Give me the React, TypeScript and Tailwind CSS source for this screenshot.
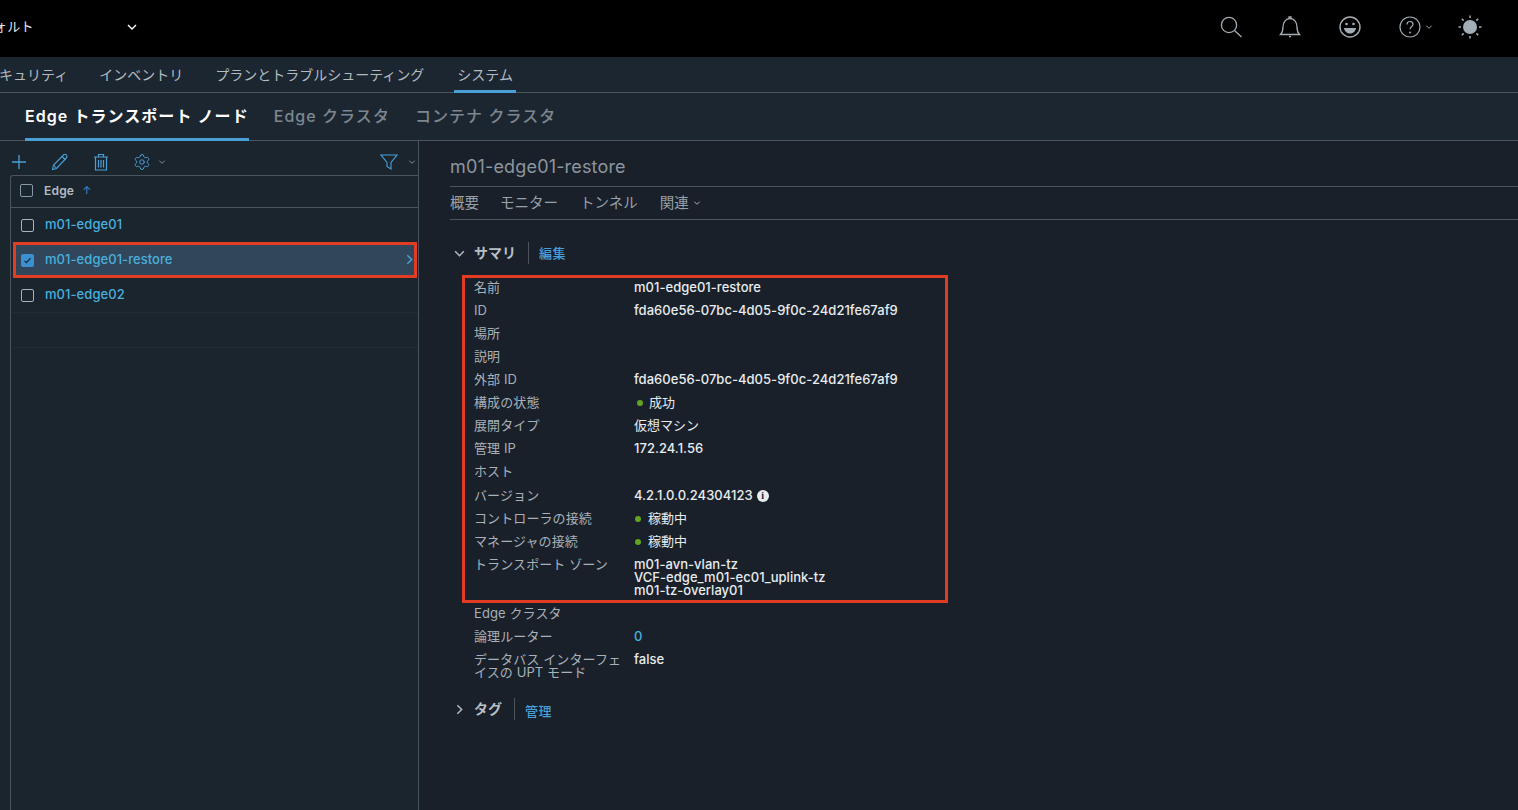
import React from "react";
import { Settings } from "lucide-react";

const FONT = "font-['Inter','Noto_Sans_CJK_JP',sans-serif]";

function Chevron({ className, dir = "down" }: { className?: string; dir?: "down" | "right" }) {
  return (
    <svg viewBox="0 0 12 12" className={className} fill="none" stroke="currentColor" strokeWidth="1.4">
      {dir === "down" ? <path d="M2 4l4 4 4-4" /> : <path d="M4 2l4 4-4 4" />}
    </svg>
  );
}

function TopIcons() {
  return (
    <div className="flex items-center text-[#a3adb5]">
      <svg viewBox="0 0 24 24" className="w-[24px] h-[24px] mr-[35px]" fill="none" stroke="currentColor" strokeWidth="1.3">
        <circle cx="10" cy="10" r="7.6" />
        <path d="M15.5 15.5L22.5 22" />
      </svg>
      <svg viewBox="0 0 24 24" className="w-[24px] h-[24px] mr-[36px]" fill="none" stroke="currentColor" strokeWidth="1.3">
        <path d="M2.5 19.5c2-2 2.5-3.5 2.5-7.5 0-5 3-8.500 7-8.500s7 3.500 7 8.500c0 4 .5 5.500 2.500 7.500z" />
        <path d="M11 3.500V2h2v1.500M11 21.500h2" />
      </svg>
      <svg viewBox="0 0 24 24" className="w-[24px] h-[24px] mr-[36px]" fill="none" stroke="currentColor" strokeWidth="1.4">
        <circle cx="12" cy="12" r="10" />
        <circle cx="8.500" cy="9" r="1.300" fill="currentColor" stroke="none" />
        <circle cx="15.500" cy="9" r="1.300" fill="currentColor" stroke="none" />
        <path d="M6 13h12c-.5 3.500-3 5.500-6 5.500s-5.500-2-6-5.500z" fill="currentColor" stroke="none" />
      </svg>
      <svg viewBox="0 0 24 24" className="w-[24px] h-[24px] mr-[3px]" fill="none" stroke="currentColor" strokeWidth="1.2">
        <circle cx="12" cy="12" r="10" />
        <path d="M9 9.500c0-2 1.300-3 3-3s3 1.100 3 2.800c0 2.500-3 2.500-3 5" />
        <circle cx="12" cy="17.500" r="1" fill="currentColor" stroke="none" />
      </svg>
      <Chevron className="w-[8px] h-[8px] mr-[25px]" />
      <svg viewBox="0 0 24 24" className="w-[24px] h-[24px] mr-[36px]" fill="none" stroke="currentColor" strokeWidth="1.500">
        <circle cx="12" cy="12" r="7" fill="currentColor" stroke="none" />
        <path d="M12 0.500v2.500M12 21v2.500M0.500 12H3M21 12h2.500M3.800 3.800l1.800 1.800M18.400 18.400l1.800 1.800M3.800 20.200l1.800-1.800M18.400 5.600l1.800-1.800" />
      </svg>
    </div>
  );
}

function Toolbar() {
  return (
    <div className="h-[34px] flex items-center justify-between text-[#4a9fd8] pl-[1px] pt-[8px]">
      <div className="flex items-center">
        <svg viewBox="0 0 16 16" className="w-[16px] h-[16px] mr-[24px]" fill="none" stroke="currentColor" strokeWidth="1.300">
          <path d="M8 1v14M1 8h14" />
        </svg>
        <svg viewBox="0 0 18 18" className="w-[18px] h-[18px] mr-[24px]" fill="none" stroke="currentColor" strokeWidth="1.100">
          <path d="M1.500 16.500l1-4.500L12.500 2c1-1 2.200-1 3 0s.8 2-.2 3L5.500 15.500z" />
          <path d="M11 3.500l3.500 3.500M2.500 12l3 3.500" />
        </svg>
        <svg viewBox="0 0 16 18" className="w-[16px] h-[18px] mr-[24px]" fill="none" stroke="currentColor" strokeWidth="1.200">
          <path d="M1 4h14M5.500 4V1.500h5V4M2.500 4v13h11V4M5.500 7v7.500M8 7v7.500M10.500 7v7.500" />
        </svg>
        <Settings className="w-[18px] h-[18px] mr-[7px]" strokeWidth={1.3} />
        <Chevron className="w-[8px] h-[8px] text-[#8a949c]" />
      </div>
      <div className="flex items-center">
        <svg viewBox="0 0 18 18" className="w-[18px] h-[18px] mr-[10px]" fill="none" stroke="currentColor" strokeWidth="1.100">
          <path d="M1 2h16l-6 7.500V16l-4-2.500v-4z" />
        </svg>
        <Chevron className="w-[8px] h-[8px] mr-[2px] text-[#8a949c]" />
      </div>
    </div>
  );
}

function Check({ checked, heavy }: { checked?: boolean; heavy?: boolean }) {
  if (checked) {
    return (
      <span className="block w-[13px] h-[13px] rounded-[2px] bg-[#3b8fd3]">
        <svg viewBox="0 0 12 12" className="w-[13px] h-[13px] p-[2px]" fill="none" stroke="#1b2a36" strokeWidth="1.600">
          <path d="M2 6.500l2.500 2.500L10 3" />
        </svg>
      </span>
    );
  }
  return (
    <span
      className={
        heavy
          ? "block w-[13px] h-[13px] rounded-[2px] border-[1.5px] border-[#8a98a3]"
          : "block w-[13px] h-[13px] rounded-[2px] border border-[#a9b2b9]"
      }
    />
  );
}

function ListRow({ name, selected }: { name: string; selected?: boolean }) {
  return (
    <div
      className={
        selected
          ? "h-[36px] -mt-[1px] ml-[2px] mr-[1px] flex items-center pl-[5px] border-[3px] border-[#e23d22] bg-[#31465a] relative"
          : "h-[35px] flex items-center pl-[10px] border-b border-[#212c35]"
      }
    >
      <Check checked={selected} />
      <span className="ml-[11px] text-[13px] font-medium tracking-[0.06px] text-[#49b0de]">{name}</span>
      {selected && (
        <Chevron dir="right" className="absolute right-[-2px] top-[8px] w-[13px] h-[13px] text-[#4a9fd8]" />
      )}
    </div>
  );
}

function Row({ label, children, tall, extra }: { label: string; children?: React.ReactNode; tall?: boolean; extra?: boolean }) {
  return (
    <div className={`flex pl-[9px] pt-[3px] ${tall ? "" : extra ? "min-h-[24px]" : "min-h-[23px]"}`}>
      <div className={`w-[160px] shrink-0 pr-[10px] text-[13px] tracking-[0.1px] leading-[13px] text-[#a8b1b8] ${extra ? "pt-[1px]" : ""}`}>{label}</div>
      <div className={`text-[13px] font-medium tracking-[0.03px] leading-[13px] text-[#e8ecee] flex-1 ${extra ? "pt-[1px]" : ""}`}>{children}</div>
    </div>
  );
}

function Status({ text, gap }: { text: string; gap: string }) {
  return (
    <span className="flex items-center font-normal">
      <span className={`w-[6px] h-[6px] rounded-full bg-[#62a420] ${gap}`} />
      {text}
    </span>
  );
}

export default function App() {
  return (
    <div className={`${FONT} w-[1518px] h-[810px] overflow-hidden flex flex-col bg-[#19202a]`}>
      <header className="h-[57px] shrink-0 bg-black flex items-center justify-between text-white pb-[4px]">
        <div className="flex items-center text-[13px] text-[#e4e6e8] -ml-[33px]">
          <span className="tracking-[0.03em]">デフォルト</span>
          <Chevron className="w-[12px] h-[12px] ml-[92px] text-white" />
        </div>
        <TopIcons />
      </header>

      <nav className="h-[36px] shrink-0 bg-[#1c2630] border-b border-[#4a545c] flex items-end text-[14px] leading-[20px] text-[#b3bbc1] -ml-[15px] w-[1533px]">
        <span className="pb-[7px] mr-[31px]">セキュリティ</span>
        <span className="pb-[7px] mr-[32px]">インベントリ</span>
        <span className="pb-[7px] mr-[30px]">プランとトラブルシューティング</span>
        <span className="pb-[5px] px-[3px] border-b-[3px] border-[#4a9fd4] -mb-[1px]">システム</span>
      </nav>

      <div className="h-[48px] shrink-0 bg-[#1c2630] border-b border-[#4a545c] flex items-end pl-[25px] text-[16px] tracking-[1.05px] font-medium leading-[24px] text-[#7c8790]">
        <span className="pb-[10px] border-b-[3px] border-[#4a9fd4] -mb-[1px] mr-[25px] text-white font-semibold">Edge トランスポート ノード</span>
        <span className="pb-[12px] mr-[25px]">Edge クラスタ</span>
        <span className="pb-[12px]">コンテナ クラスタ</span>
      </div>

      <div className="flex-1 flex min-h-0">
        <aside className="w-[419px] shrink-0 bg-[#1b252e] border-r border-[#4a545c] pl-[10px] flex flex-col">
          <Toolbar />
          <div className="flex-1 border-l border-t rounded-tl-[3px] border-[#4a545c]">
            <div className="h-[32px] flex items-center pl-[9px] pb-[2px] border-b border-[#4a545c]">
              <Check heavy />
              <span className="ml-[11px] text-[12px] tracking-[0.2px] font-semibold text-[#b4bcc2]">Edge</span>
              <span className="ml-[8px] text-[11px] leading-none text-[#3f8fc9]">↑</span>
            </div>
            <ListRow name="m01-edge01" />
            <ListRow name="m01-edge01-restore" selected />
            <ListRow name="m01-edge02" />
            <div className="h-[35px] border-b border-[#212c35]" />
          </div>
        </aside>

        <main className="flex-1 min-w-0 pl-[31px]">
          <div className="h-[46px] border-b border-[#4a545c] flex items-center pt-[6px] text-[18px] tracking-[0.17px] text-[#8c969e]">
            m01-edge01-restore
          </div>
          <div className="h-[33px] border-b border-[#4a545c] flex items-center text-[14.5px] text-[#97a1a9]">
            <span className="mr-[21px]">概要</span>
            <span className="mr-[22px]">モニター</span>
            <span className="mr-[22px]">トンネル</span>
            <span>関連</span>
            <Chevron className="w-[8px] h-[8px] ml-[4px] text-[#b0b9bf]" />
          </div>

          <div className="mt-[21px] h-[24px] flex items-center">
            <Chevron className="w-[13px] h-[13px] ml-[3px] text-[#b0b9bf]" />
            <span className="ml-[8px] mb-[2px] text-[14px] font-semibold text-[#b7bfc5]">サマリ</span>
            <span className="ml-[12px] w-px h-[22px] bg-[#4a545c]" />
            <span className="ml-[10px] mt-[2px] text-[13px] tracking-[0.5px] font-medium text-[#4a9fd8]">編集</span>
          </div>

          <div className="mt-[10px] ml-[12px] w-[486px] border-[3px] border-[#e23d22] pb-[3px]">
            <Row label="名前">m01-edge01-restore</Row>
            <Row label="ID">fda60e56-07bc-4d05-9f0c-24d21fe67af9</Row>
            <Row label="場所" />
            <Row label="説明" />
            <Row label="外部 ID">fda60e56-07bc-4d05-9f0c-24d21fe67af9</Row>
            <Row label="構成の状態"><Status text="成功" gap="ml-[3px] mr-[6px]" /></Row>
            <Row label="展開タイプ"><span className="font-normal">仮想マシン</span></Row>
            <Row label="管理 IP">172.24.1.56</Row>
            <Row label="ホスト" />
            <Row label="バージョン" extra>
              <span className="flex items-center">
                4.2.1.0.0.24304123
                <span className="ml-[4px] w-[12px] h-[12px] rounded-full bg-[#e8ecee] text-[#19202a] text-[10px] leading-[12px] font-bold text-center font-['Liberation_Serif',serif]">i</span>
              </span>
            </Row>
            <Row label="コントローラの接続"><Status text="稼動中" gap="ml-[1px] mr-[7px]" /></Row>
            <Row label="マネージャの接続"><Status text="稼動中" gap="ml-[1px] mr-[7px]" /></Row>
            <Row label="トランスポート ゾーン" tall>
              m01-avn-vlan-tz<br />VCF-edge_m01-ec01_uplink-tz<br />m01-tz-overlay01
            </Row>
          </div>

          <div className="ml-[15px] w-[486px] pt-[1px]">
            <Row label="Edge クラスタ" />
            <Row label="論理ルーター"><span className="text-[#49b0de]">0</span></Row>
            <Row label="データバス インターフェイスの UPT モード" tall>false</Row>
          </div>

          <div className="mt-[18px] h-[24px] flex items-center">
            <Chevron dir="right" className="w-[13px] h-[13px] ml-[3px] text-[#b0b9bf]" />
            <span className="ml-[8px] mb-[2px] text-[14px] font-semibold text-[#b7bfc5]">タグ</span>
            <span className="ml-[12px] w-px h-[22px] bg-[#4a545c]" />
            <span className="ml-[10px] mt-[5px] text-[13px] tracking-[0.5px] font-medium text-[#4a9fd8]">管理</span>
          </div>
        </main>
      </div>
    </div>
  );
}
